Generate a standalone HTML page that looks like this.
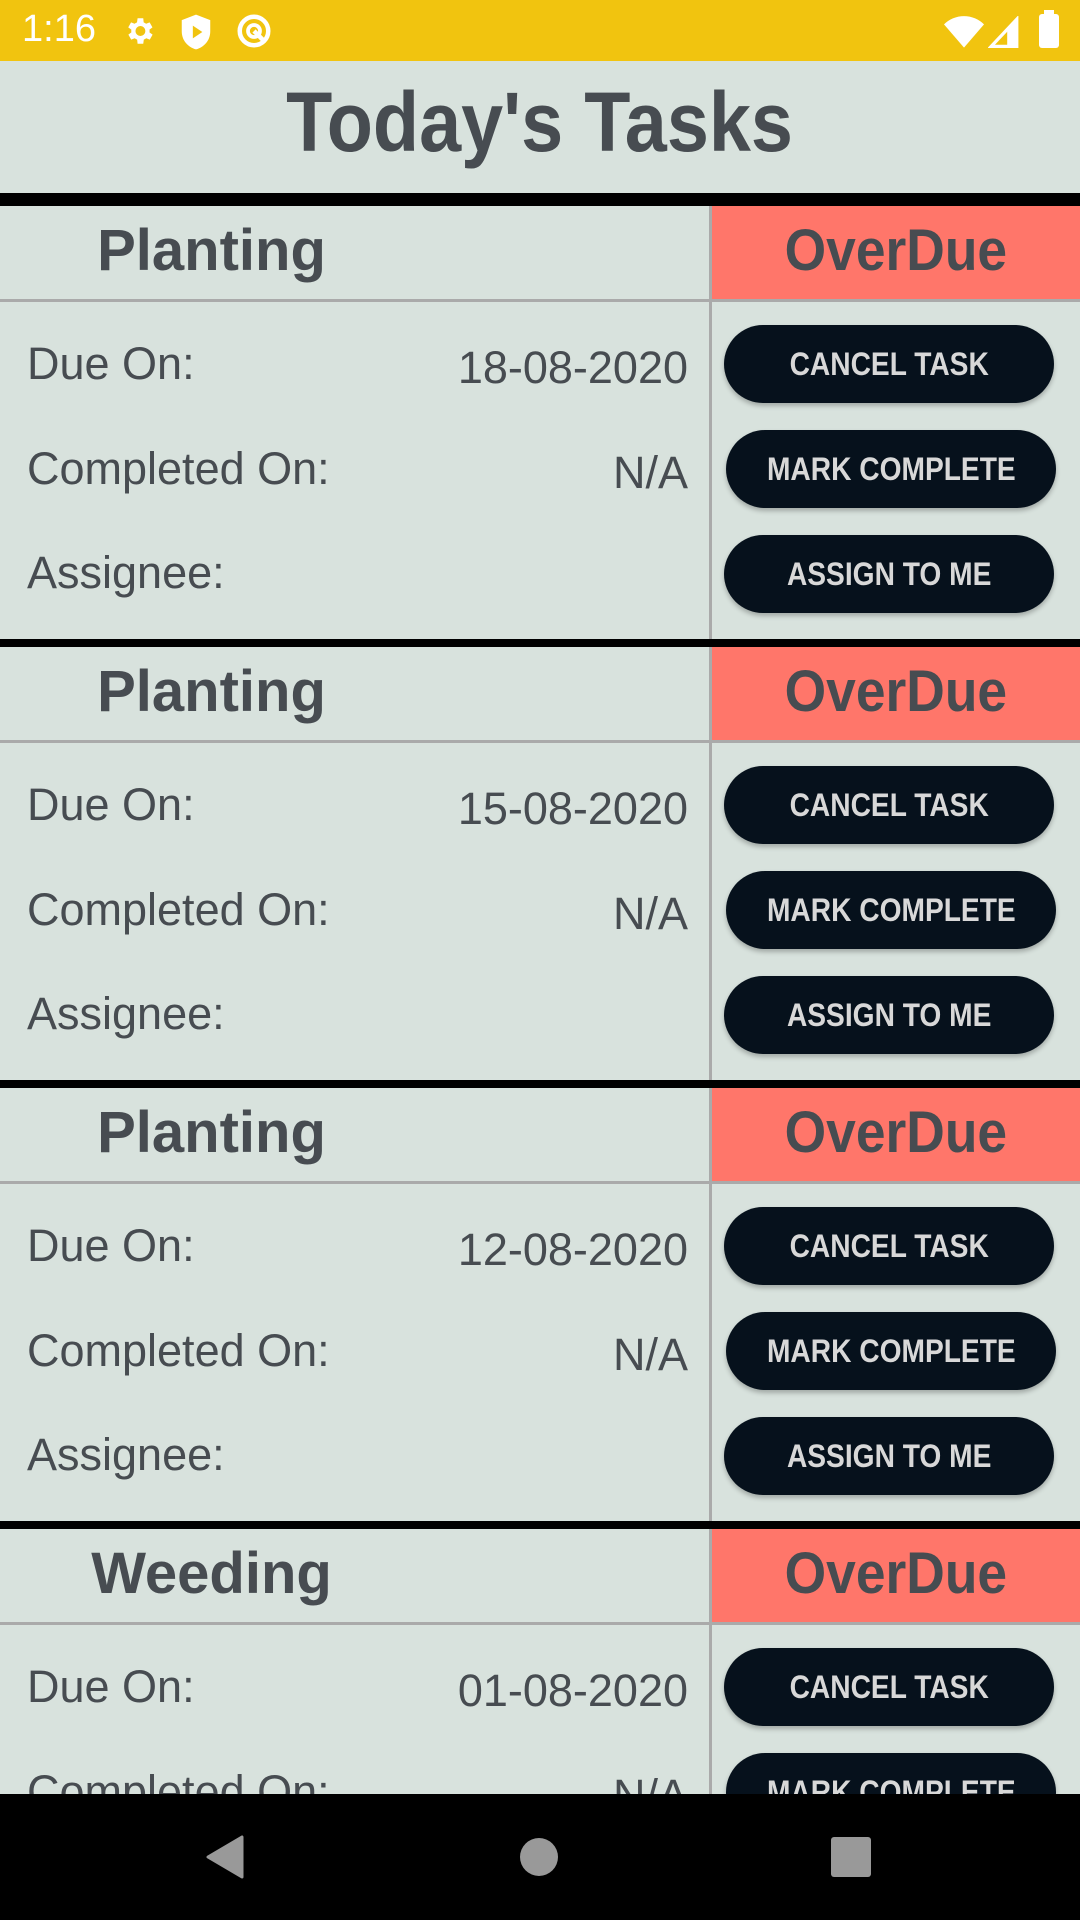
<!DOCTYPE html>
<html><head><meta charset="utf-8"><style>
*{margin:0;padding:0;box-sizing:border-box}
html,body{width:1080px;height:1920px;overflow:hidden}
body{background:#d8e2dd;font-family:"Liberation Sans",sans-serif;position:relative;color:#474c51}
.abs{position:absolute}
.sb{left:0;top:0;width:1080px;height:61px;background:#f1c40f;color:#fff}
.title{left:0;top:61px;width:1080px;height:132px;text-align:center;line-height:122px;font-size:84px;font-weight:bold}
.title span,.btn span,.hdr span{display:inline-block}
.bk{left:0;width:1080px;background:#000}
.card{left:0;width:1080px;height:441px;overflow:hidden}
.hdr{position:absolute;top:0;height:93px;line-height:90px;font-size:58px;font-weight:bold;text-align:center}
.lbl{position:absolute;left:27px;font-size:45px;line-height:50px}
.val{position:absolute;right:392px;font-size:45px;line-height:50px;text-align:right}
.btn{position:absolute;left:724px;width:330px;height:78px;border-radius:39px;background:#06111c;color:#d8d8d8;font-weight:bold;font-size:32px;line-height:78px;text-align:center;box-shadow:0 3px 5px rgba(0,0,0,.25)}
.btn span{transform:scaleX(0.88)}
.nav{left:0;top:1794px;width:1080px;height:126px;background:#000}
</style></head><body>
<div class="abs sb">
<div class="abs" style="left:22px;top:8px;font-size:38px">1:16</div>
<svg class="abs" style="left:122px;top:14px" width="34" height="34" viewBox="0 0 24 24"><path fill="#fff" d="M19.4 13a7.5 7.5 0 000-2l2.1-1.6-2-3.5-2.5 1a7 7 0 00-1.7-1L15 3h-4l-.4 2.9a7 7 0 00-1.7 1l-2.5-1-2 3.5L6.6 11a7.5 7.5 0 000 2l-2.1 1.6 2 3.5 2.5-1a7 7 0 001.7 1L11 21h4l.4-2.9a7 7 0 001.7-1l2.5 1 2-3.5zM13 15.5a3.5 3.5 0 110-7 3.5 3.5 0 010 7z"/></svg>
<svg class="abs" style="left:180px;top:13px" width="32" height="38" viewBox="0 0 20 24"><path fill="#fff" d="M10 1L1 4.5v7c0 6 4 10 9 11.5 5-1.5 9-5.5 9-11.5v-7z"/><path fill="#f1c40f" d="M8 8v8l6-4z"/></svg>
<svg class="abs" style="left:236px;top:13px" width="36" height="36" viewBox="0 0 24 24"><circle cx="12" cy="12" r="9.5" fill="none" stroke="#fff" stroke-width="3"/><circle cx="12" cy="12" r="4" fill="none" stroke="#fff" stroke-width="2.5"/><path d="M12 12l7 7" stroke="#fff" stroke-width="3"/></svg>
<svg class="abs" style="left:944px;top:14px" width="40" height="34" viewBox="0 0 24 20"><path fill="#fff" d="M0 6a17 17 0 0124 0L12 20z"/></svg>
<svg class="abs" style="left:988px;top:16px" width="32" height="32" viewBox="0 0 20 20"><path fill="none" stroke="#fff" stroke-width="2" d="M2 19L18 2v17z"/><path fill="#fff" d="M12 9l6-7v17h-6z"/></svg>
<div class="abs" style="left:1039px;top:14px;width:20px;height:34px;background:#fff;border-radius:3px"></div>
<div class="abs" style="left:1044px;top:10px;width:10px;height:5px;background:#fff"></div>
</div>
<div class="abs title"><span style="transform:scaleX(0.9)">Today's Tasks</span></div>
<div class="abs bk" style="top:193px;height:13px"></div>

<div class="abs card" style="top:206px">
<div class="hdr" style="left:0;width:423px">Planting</div>
<div class="hdr" style="left:712px;width:368px;background:#ff766a"><span style="transform:scaleX(0.92)">OverDue</span></div>
<div class="abs" style="left:0;top:93px;width:1080px;height:3px;background:#aaa"></div>
<div class="abs" style="left:709px;top:0;width:3px;height:433px;background:#aaa"></div>
<div class="lbl" style="top:133px">Due On:</div><div class="val" style="top:137px">18-08-2020</div>
<div class="lbl" style="top:238px">Completed On:</div><div class="val" style="top:242px">N/A</div>
<div class="lbl" style="top:342px">Assignee:</div>
<div class="btn" style="top:119px"><span>CANCEL TASK</span></div>
<div class="btn" style="top:224px;left:726px"><span>MARK COMPLETE</span></div>
<div class="btn" style="top:329px"><span>ASSIGN TO ME</span></div>
<div class="abs bk" style="top:433px;height:8px"></div>
</div>

<div class="abs card" style="top:647px">
<div class="hdr" style="left:0;width:423px">Planting</div>
<div class="hdr" style="left:712px;width:368px;background:#ff766a"><span style="transform:scaleX(0.92)">OverDue</span></div>
<div class="abs" style="left:0;top:93px;width:1080px;height:3px;background:#aaa"></div>
<div class="abs" style="left:709px;top:0;width:3px;height:433px;background:#aaa"></div>
<div class="lbl" style="top:133px">Due On:</div><div class="val" style="top:137px">15-08-2020</div>
<div class="lbl" style="top:238px">Completed On:</div><div class="val" style="top:242px">N/A</div>
<div class="lbl" style="top:342px">Assignee:</div>
<div class="btn" style="top:119px"><span>CANCEL TASK</span></div>
<div class="btn" style="top:224px;left:726px"><span>MARK COMPLETE</span></div>
<div class="btn" style="top:329px"><span>ASSIGN TO ME</span></div>
<div class="abs bk" style="top:433px;height:8px"></div>
</div>

<div class="abs card" style="top:1088px">
<div class="hdr" style="left:0;width:423px">Planting</div>
<div class="hdr" style="left:712px;width:368px;background:#ff766a"><span style="transform:scaleX(0.92)">OverDue</span></div>
<div class="abs" style="left:0;top:93px;width:1080px;height:3px;background:#aaa"></div>
<div class="abs" style="left:709px;top:0;width:3px;height:433px;background:#aaa"></div>
<div class="lbl" style="top:133px">Due On:</div><div class="val" style="top:137px">12-08-2020</div>
<div class="lbl" style="top:238px">Completed On:</div><div class="val" style="top:242px">N/A</div>
<div class="lbl" style="top:342px">Assignee:</div>
<div class="btn" style="top:119px"><span>CANCEL TASK</span></div>
<div class="btn" style="top:224px;left:726px"><span>MARK COMPLETE</span></div>
<div class="btn" style="top:329px"><span>ASSIGN TO ME</span></div>
<div class="abs bk" style="top:433px;height:8px"></div>
</div>

<div class="abs card" style="top:1529px;height:265px">
<div class="hdr" style="left:0;width:423px">Weeding</div>
<div class="hdr" style="left:712px;width:368px;background:#ff766a"><span style="transform:scaleX(0.92)">OverDue</span></div>
<div class="abs" style="left:0;top:93px;width:1080px;height:3px;background:#aaa"></div>
<div class="abs" style="left:709px;top:0;width:3px;height:433px;background:#aaa"></div>
<div class="lbl" style="top:133px">Due On:</div><div class="val" style="top:137px">01-08-2020</div>
<div class="lbl" style="top:238px">Completed On:</div><div class="val" style="top:242px">N/A</div>
<div class="btn" style="top:119px"><span>CANCEL TASK</span></div>
<div class="btn" style="top:224px;left:726px"><span>MARK COMPLETE</span></div>
</div>

<div class="abs nav">
<svg class="abs" style="left:205px;top:41px" width="40" height="44" viewBox="0 0 40 44"><path fill="#999" d="M37 2v40L3 22z" stroke="#999" stroke-width="3" stroke-linejoin="round"/></svg>
<div class="abs" style="left:520px;top:44px;width:38px;height:38px;border-radius:50%;background:#999"></div>
<div class="abs" style="left:831px;top:43px;width:40px;height:40px;border-radius:3px;background:#999"></div>
</div>
</body></html>
